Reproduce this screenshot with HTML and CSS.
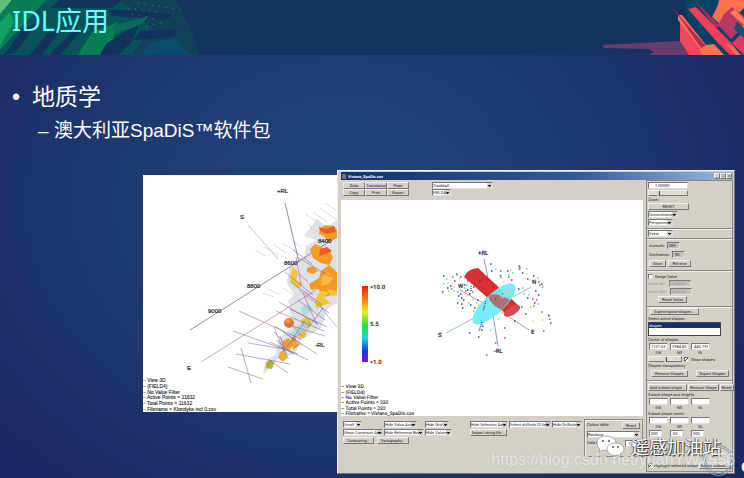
FILE: index.html
```html
<!DOCTYPE html>
<html lang="zh-CN">
<head>
<meta charset="utf-8">
<title>IDL应用</title>
<link rel="stylesheet" href="styles.css">
</head>
<body>
<main class="slide">
  <header class="banner">
    <svg class="art" viewBox="0 0 210 55" aria-hidden="true">
      <path fill="#07535a" d="M0 0H160L176 16 168 35 145 55H0Z"/>
      <path fill="#114058" d="M120 0H176L190 28 200 55H132L150 28Z"/>
      <path fill="#14305c" d="M108 9L172 14 168 19 112 16ZM140 31L178 29 174 37 134 40ZM60 0H122L112 8H50Z"/>
      <path fill="#087d56" d="M0 10L14 0H46L20 28 0 50ZM78 55L92 32 118 22 112 44 102 55Z"/>
      <path fill="#13a064" d="M0 22L10 12 14 22 0 46Z"/>
      <path fill="#5cc07c" d="M0 0H12L0 14Z"/>
      <path fill="#123258" d="M22 30L38 22 16 52 4 55ZM48 33L60 31 42 55H30ZM70 34L82 30 60 55H50ZM106 44L140 22 132 42 118 55H100Z"/>
      <path fill="#0b6a5c" d="M112 26L148 16 142 24 116 34Z"/>
      <path fill="#0a4c6c" d="M150 42L176 38 190 55H142Z"/>
      <path stroke="#4b8b90" stroke-width="1" stroke-dasharray="1 6" fill="none" d="M128 8L160 12M132 14L158 20M138 3L182 10M146 26L166 22"/>
    </svg>
    <svg class="art art-right" viewBox="0 0 150 55" aria-hidden="true">
      <path fill="#084266" d="M90 0H150V55H112L94 20Z"/>
      <path fill="#663e6d" d="M9 45L86 41 96 55H54L60 52 55 49 9 48Z"/>
      <path fill="#f0455b" d="M86 22L111 51 109 55H95L86 41Z"/>
      <path fill="#ff7150" d="M84 15H88L112 45 120 44 130 55H108L104 46 84 20Z"/>
      <path fill="#b52d5b" d="M79 8L112 46 107 48ZM100 0L126 26 122 28Z"/>
      <path fill="#f23f5c" d="M94 9L102 7 140 46 146 55H136L124 43Z"/>
      <path fill="#ff704f" d="M125 0H150V8L130 28 118 17 124 5Z"/>
      <path fill="#b73767" d="M130 14L138 7 150 16V26L137 39 124 25Z"/>
      <path fill="#ff7c50" d="M136 13L141 9 150 19V25ZM143 32L150 25V34Z"/>
      <path fill="#e1365f" d="M138 43L150 31V55Z"/>
      <path fill="#f5714e" d="M132 44L138 46 147 55H142Z"/>
      <path fill="#15506f" d="M143 22L150 28V38L140 29Z"/>
    </svg>
    <h1>IDL应用</h1>
  </header>

  <ul class="outline">
    <li>地质学
      <ul><li>澳大利亚SpaDiS™软件包</li></ul>
    </li>
  </ul>

  <section class="stage">
    <svg class="figure" viewBox="143 175 194 237" role="img" aria-label="Klondyke 3D">
      <path fill="none" stroke="#d9c8e3" d="M255 250l10 6M264 247l14 8M273 244l13 9M282 243l14 8M291 240l10 7M305 214l14 9M313 212l14 10M320 208l17 12M325 203l12 8M308 225l12 8M262 293l12 4M268 289l11 5M325 260l12 7M322 286l15 9M300 258l20 14M286 280l18 12M283 288l18 12" stroke-width=".7"/>
      <g fill="#d6d6df" opacity=".75">
        <path d="M304 236l13-17 10 8 10-7v83l-20 12-18-12-12-20 3-19 14-6 2-12 10-6Z"/>
        <path d="M288 300l13-10 20 1 8 13-8 24-20 12-6 14-16 4-16 17 2-13 11-8 3-15 14-13Z"/>
      </g>
      <path fill="none" stroke="#6b587d" stroke-width=".7" d="M190 330L337 237M285 203L299 262"/>
      <path fill="none" stroke="#bf7891" stroke-width=".7" d="M201 362L316 290"/>
      <path fill="none" stroke="#82bda4" stroke-width=".7" d="M248 225L278 259M313 298l24 29"/>
      <g fill="#f29a22">
        <path d="M320 229l5-4 9 1 3 4v7l-9 5-4-6-5-2Z"/><path d="M310 249l5-5 7 3 1 8 6-6 4 9-4 7-8-2-8-5Z"/>
        <path d="M309 284l10-6 2-7 8-6 8 7v21l-12 4-7-8-7 1Z"/><path d="M307 268l6-2 5 5-5 3-6-2Z"/>
      </g>
      <path fill="#ef5c2a" d="M319 227l7 2 8-3 2 6-9 2-7-3ZM320 249l7-2 5 4-6 3-7 2Z"/>
      <path fill="#ffb648" d="M322 276l6-4 5 6-4 6-8 2Z"/>
      <path fill="#efc53b" d="M293 267l5 5-2 8 7 4-4 5-9-8 1-8ZM315 300l5-9 9 1-5 6 7 5-7 2-8 4ZM327 289l10 2v4l-6 1Z"/>
      <circle cx="289" cy="323" r="5" fill="#e47d27"/><circle cx="288" cy="321" r="2" fill="#ff9b42"/>
      <circle cx="306" cy="323" r="5" fill="#e7bd35"/><circle cx="302" cy="334" r="4" fill="#e2bc47"/>
      <path fill="#eda126" d="M282 342l6-4 7 5-5 6-7-1ZM291 338l4-3 1 7 4 3-7 5Z"/>
      <path fill="#e9b236" d="M280 352l5-3 2 9-4 4-5-4Z"/><path fill="#abb52b" d="M266 363l4-3 4 3-2 6-6-1Z"/>
      <path fill="#9ad7d5" opacity=".7" d="M296 327l10-6 3 4-12 12-8-2ZM300 308l8-4 6 5-10 7Z"/>
      <path fill="none" stroke="#75568d" stroke-width=".5" d="M239 311l62 28M233 331l65 23M248 343l42 7M236 354l54 10M228 367l35 12M241 348l10 35M276 311l48 20M279 302l39 22M290 309l37 18M285 324l40 12M283 332l34 22M275 326l27 19M276 340l17 14M268 359l20 14M270 342l38 18M274 327l10 25M280 336l8 23M293 250l19 14M297 257l34 20M285 272l28 23M291 282l31 23M299 290l30 23M298 300l27 20M303 293l14 32M323 308l-18 24M287 347l18-26"/>
      <path fill="none" stroke="#c46ac0" stroke-width=".7" d="M299 274l9 8M305 291l8 8M290 323l12 13M274 332l14 14M286 348l13-14M296 257l5 27"/>
      <g class="axis-text"><text x="277" y="193">+RL</text><text x="240" y="219">S</text><text x="318" y="243">8400</text><text x="284" y="265">8600</text><text x="247" y="288">8800</text><text x="208" y="313">9000</text><text x="187" y="370">E</text><text x="315" y="347">-RL</text></g>
      <g class="info-text"><text x="143" y="382">– View 3D</text><text x="143" y="388">–  (FIELD4)</text><text x="143" y="394">– No Value Filter</text><text x="143" y="399">– Active Points = 11632</text><text x="143" y="405">– Total Points = 11632</text><text x="143" y="411">– Filename = Klondyke incl 0.csv</text></g>
    </svg>

    <article class="window">
      <div class="titlebar"><span class="appicon"></span><span class="caption">Viviane_SpaDis.csv</span>
        <button aria-label="Minimize">_</button><button aria-label="Maximize">□</button><button aria-label="Close">×</button></div>
      <div class="content">
        <div class="workspace">
          <div class="toolbar">
            <div class="actions"><button>Data</button><button>Translation</button><button>Pose</button><button>Copy</button><button>Print</button><button>Export</button></div>
            <div class="modes"><select aria-label="Mode"><option>Trackball</option></select><select class="fit" aria-label="Field"><option>FIELD4</option></select></div>
          </div>
          <svg class="plot" viewBox="341 200 302 216" role="img" aria-label="Viviane 3D">
            <defs>
              <linearGradient id="spectrum" x1="0" y1="0" x2="0" y2="1"><stop offset="0" stop-color="#f21b08"/><stop offset=".2" stop-color="#ff8b00"/><stop offset=".34" stop-color="#eeee10"/><stop offset=".52" stop-color="#20e62c"/><stop offset=".68" stop-color="#10dfe2"/><stop offset=".86" stop-color="#1638ef"/><stop offset="1" stop-color="#7d13e8"/></linearGradient>
              <linearGradient id="tube" x1="0" y1="1" x2="1" y2="0"><stop offset="0" stop-color="#b61d23"/><stop offset=".5" stop-color="#dc3035"/><stop offset="1" stop-color="#b31d24"/></linearGradient>
            </defs>
            <rect x="362" y="286" width="6" height="76" fill="url(#spectrum)"/>
            <path fill="none" stroke="#6d6599" stroke-width=".7" d="M484 259l4 19M493 315l5 31"/>
            <path fill="none" stroke="#6fac75" stroke-width=".7" d="M446 333l28-15M513 297l18-10"/>
            <path fill="none" stroke="#b4626f" stroke-width=".7" d="M460 290l23 13M500 311l29 19"/>
            <g fill="none" stroke-width="1.6">
            <path stroke="#3636d8" d="M442 292h1.500M443 276h1.500M447 288h1.500M450 286h1.500M454 281h1.500M458 296h1.500M457 303h1.500M460 294h1.500M461 298h1.500M461 304h1.500M463 300h1.500M462 308h1.500M467 290h1.500M469 294h1.500M470 305h1.500M474 308h1.500M477 300h1.500M480 320h1.500M482 326h1.500M481 330h1.500M469 333h1.500M478 337h1.500M490 264h1.500M491 271h1.500M500 276h1.500M507 271h1.500M511 280h1.500M519 267h1.500M522 273h1.500M527 279h1.500M533 276h1.500M535 291h1.500M538 295h1.500M534 303h1.500M521 307h1.500M525 314h1.500M548 316h1.500M550 323h1.500M456 274h1.500M464 285h1.500M473 287h1.500M518 289h1.500M527 298h1.500M541 284h1.500M514 321h1.500"/>
            <path stroke="#de4058" d="M452 277h1.500M460 277h1.500M465 291h1.500M472 292h1.500M479 309h1.500M500 271h1.500M508 277h1.500M518 266h1.500M519 269h1.500M538 282h1.500M539 285h1.500M532 299h1.500M536 300h1.500M533 306h1.500M541 312h1.500M548 315h1.500M549 319h1.500M543 331h1.500M504 328h1.500M504 338h1.500M486 355h1.500M495 343h1.500M451 289h1.500M467 281h1.500"/>
            <path stroke="#68d968" d="M443 284h1.500M448 291h1.500M456 275h1.500M457 292h1.500M466 285h1.500M468 303h1.500M472 299h1.500M473 311h1.500M500 278h1.500M508 288h1.500M518 269h1.500M526 269h1.500M537 278h1.500M542 287h1.500M530 307h1.500M523 294h1.500M498 319h1.500M512 273h1.500M479 272h1.500"/>
            <path stroke="#dfd867" d="M447 283h1.500M453 287h1.500M459 279h1.500M499 275h1.500M510 270h1.500M526 274h1.500M529 280h1.500M542 286h1.500M533 305h1.500M542 320h1.500M532 321h1.500M478 305h1.500M503 282h1.500M466 296h1.500"/>
            <path stroke="#5bd7e5" d="M446 279h1.500M453 291h1.500M464 288h1.500M476 303h1.500M495 269h1.500M508 275h1.500M522 288h1.500M528 295h1.500M538 304h1.500M490 330h1.500M500 292h1.500M474 316h1.500"/>
            </g>
            <path fill="url(#tube)" d="M464 277Q467 269 478 268L520 307Q518 314 506 314Z"/>
            <ellipse cx="512" cy="311" rx="9" ry="4" transform="rotate(-30 512 311)" fill="#d34b4e"/>
            <ellipse cx="494" cy="304" rx="28" ry="10" transform="rotate(-43 494 304)" fill="#70edf3" opacity=".94"/>
            <path fill="#aa7378" d="M488 295Q497 292 510 300L502 310Q490 305 488 295Z"/>
            <ellipse cx="507" cy="292" rx="8" ry="3" transform="rotate(-43 507 292)" fill="#a8d8dd" opacity=".75"/>
            <path stroke="#3446b9" stroke-width="1.4" stroke-dasharray="1 1" d="M486 301l-3 10M482 322l-3 9M471 286v6" fill="none"/>
            <path stroke="#531f35" stroke-width="1.2" fill="none" d="M479 281h2M493 287h1M502 294h1M495 299h1"/>
            <g class="axis-text"><text x="478" y="255">+RL</text><text x="438" y="337">S</text><text x="531" y="334">E</text><text x="532" y="284">N</text><text x="458" y="288">W</text><text x="494" y="353">-RL</text></g>
            <g class="scale-text"><text x="370" y="289">&gt;10.0</text><text x="370" y="326">5.5</text><text x="370" y="364">&lt;1.0</text></g>
            <g class="info-text"><text x="341" y="388">– View 3D</text><text x="341" y="394">–  (FIELD4)</text><text x="341" y="399">– No Value Filter</text><text x="341" y="404">– Active Points = 232</text><text x="341" y="410">– Total Points = 232</text><text x="341" y="415">– Filename = Viviane_SpaDis.csv</text></g>
          </svg>
          <div class="options">
            <div class="option-grid">
              <select class="fit" aria-label="Size"><option>Small</option></select>
              <select class="mid" aria-label="Value axis"><option>Hide Value Axis</option></select>
              <select class="mini" aria-label="Grid"><option>Hide Grid</option></select>
              <select aria-label="Selection axis"><option>Hide Selection Axis</option></select>
              <select aria-label="Drillhole field"><option>Select drillhole ID field</option></select>
              <select aria-label="Drillholes"><option>Hide Drillholes</option></select>
              <select aria-label="Constraint axis"><option>Show Constraint Axis</option></select>
              <select aria-label="Reference box"><option>Hide Reference Box</option></select>
              <select class="small" aria-label="Values"><option>Hide Values</option></select>
              <button class="import">Import string file...</button>
              <div class="pair"><button>Contouring...</button><button>Variography...</button></div>
            </div>
            <div class="colours">
              <div class="spread"><label for="palette">Colour table:</label><button>Reset</button></div>
              <select id="palette"><option>Rainbow</option></select>
              <div class="spread"><label for="range">Data Range</label><input id="range" value="10"></div>
            </div>
          </div>
        </div>

        <aside class="side">
          <section>
            <input class="zoom" aria-label="Zoom factor" value="1.00000">
            <input class="slider" id="zoom" type="range" value="10"><label for="zoom">Zoom</label>
            <button class="reset">RESET</button>
            <select class="w30" aria-label="Constraint"><option>Unconstrained</option></select>
            <select class="w24" aria-label="Projection"><option>Perspective</option></select>
          </section>
          <section class="tight"><select class="w24" aria-label="Value"><option>Value</option></select></section>
          <section class="roomy">
            <div class="row"><label for="az">Azimuth:</label><input class="grey w12" id="az" value="000"></div>
            <div class="row"><label for="de">Declination:</label><input class="grey w12" id="de" value="-90"></div>
            <div class="row"><button>Store</button><button>Retrieve</button></div>
          </section>
          <section class="loose">
            <label class="row"><input type="checkbox">Range Value</label>
            <div class="row dim"><label for="mn">Value Min:</label><input class="grey w21" id="mn" value="0.00000" disabled></div>
            <div class="row dim"><label for="mx">Value Max:</label><input class="grey w21" id="mx" value="0.00000" disabled></div>
            <button class="indent">Reset Value</button>
          </section>
          <section>
            <button class="super">Superimpose shapes...</button>
            <label for="shapes">Select active shapes:</label>
            <select class="list" id="shapes" size="2"><option selected>shapes</option></select>
            <span>Centre of shapes:</span>
            <div class="triple"><label><input value="1101.63">EW</label><label><input value="2984.85">NS</label><label><input value="-440.739">RL</label></div>
            <div class="row top"><input class="slider short" id="tr" type="range" value="50"><label class="row"><input type="checkbox" checked>Show shapes</label></div>
            <label for="tr">Shapes transparency</label>
            <div class="row around"><button>Remove Shapes</button><button>Export Shapes</button></div>
          </section>
          <section class="last">
            <div class="row"><button>Add subset shape...</button><button>Remove Shape</button><button>Reset</button></div>
            <span>Subset shape axis lengths</span>
            <div class="triple"><label><input>EW</label><label><input>NS</label><label><input>RL</label></div>
            <span>Subset shape center</span>
            <div class="triple"><label><input>EW</label><label><input>NS</label><label><input>RL</label></div>
            <div class="triple narrow"><input aria-label="Rotation" value="000"><input aria-label="Tilt" value="-00"><input aria-label="Roll" value="000"></div>
            <div class="row end"><label class="row"><input type="checkbox" checked>Highlight selected shape</label><button>Export subset...</button></div>
          </section>
        </aside>
      </div>
    </article>
  </section>

  <div class="badge">e</div>
  <div class="brand">
    <svg viewBox="0 0 29 23" aria-hidden="true"><g fill="#fff" stroke="#777" stroke-width=".6"><path d="M10 1C4 1 1 4 1 8c0 3 1 4 3 6l-1 3 4-2c8 2 13-2 13-7 0-4-4-7-10-7Z"/><path d="M20 8c-6 0-9 3-9 6 0 4 5 8 11 6l3 2-1-3c2-1 4-3 4-5 0-3-4-6-8-6Z"/></g><g fill="#555"><circle cx="7" cy="6" r="1"/><circle cx="13" cy="6" r="1"/><circle cx="17" cy="12" r="1"/><circle cx="22" cy="12" r="1"/></g></svg>
    <span>遥感加油站</span>
  </div>
  <div class="url">https://blog.csdn.net/yuanYW7556</div>
</main>
</body>
</html>
```
FILE: styles.css
```css
* { box-sizing: border-box; }
body { margin: 0; background: #182862; font-family: "Liberation Sans", "Noto Sans CJK SC", sans-serif; }
.slide {
  position: relative;
  min-height: 100vh;
  overflow: hidden;
  color: #fff;
  background: radial-gradient(ellipse 60% 75% at 46% 42%, #20457b 0%, #1e3b72 45%, #1a2963 100%);
}
.banner { position: relative; height: 55px; padding-left: 12px; background: #16335f; overflow: hidden; }
.art { position: absolute; left: 0; top: 0; height: 55px; }
.art-right { left: auto; right: 0; }
h1 { position: relative; margin: 0; font: 400 27px/42px "Noto Sans", "Noto Sans CJK SC", sans-serif; color: #70faff; }
.outline, .outline ul { margin: 0; padding: 0; list-style: none; }
.outline { padding: 24px 0 0 12px; font-size: 23px; line-height: 36px; }
.outline > li::before { content: "•"; display: inline-block; width: 20px; }
.outline ul { padding-left: 26px; font-size: 19px; line-height: 32px; }
.outline ul li::before { content: "–"; display: inline-block; width: 16px; }

.stage { display: grid; grid-template-columns: 194fr 398fr; align-items: start; margin: 23px 9px 0 143px; }
.figure { display: block; width: 100%; margin-top: 5px; background: #fff; }
.axis-text { font-size: 6px; fill: #222; stroke: #222; stroke-width: .2px; }
.scale-text { font-size: 6px; font-weight: 700; fill: #333; }
.info-text { font-size: 5px; fill: #222; stroke: #222; stroke-width: .1px; white-space: pre; }

.window { min-width: 0; padding: 1px 1px 1px 3px; background: #d4d0c8; border: 1px solid; border-color: #eee #777 #777 #eee; color: #222; font-family: Roboto, sans-serif; font-size: 4px; line-height: 5px; text-rendering: geometricPrecision; }
.titlebar { display: flex; align-items: center; height: 8px; padding: 0 1px; background: linear-gradient(90deg, #12306f, #32599c 60%, #9bb9df); color: #fff; }
.appicon { width: 4px; height: 5px; margin-right: 2px; background: #826a76; }
.caption { flex: 1; font-weight: 700; }
.titlebar button { width: 6px; height: 6px; padding: 0; line-height: 4px; }
.content { display: grid; grid-template-columns: minmax(0, 302fr) minmax(0, 87fr); gap: 3px; }
.workspace { display: flex; flex-direction: column; min-width: 0; }
button, input, select { margin: 0; font: inherit; color: #222; border-radius: 0; }
button { height: 7px; padding: 0 3px; line-height: 5px; white-space: nowrap; background: #d4d0c8; border: 1px solid; border-color: #eee #777 #777 #eee; }
input, select { width: 100%; height: 7px; padding: 0 2px; line-height: 5px; background: #fff; border: 1px solid; border-color: #777 #ddd #ddd #777; }
select {
  appearance: none;
  padding: 0;
  background:
    linear-gradient(#222, #222) right 1px top 2px / 3px 1px no-repeat,
    linear-gradient(#222, #222) right 2px top 3px / 1px 1px no-repeat,
    linear-gradient(#d4d0c8, #d4d0c8) right / 5px 100% no-repeat, #fff;
}
.toolbar { display: flex; gap: 23px; padding: 2px 2px 4px; }
.actions { display: grid; grid-template-columns: repeat(3, 22px); }
.actions button { padding: 0; }
.modes { display: grid; width: 61px; }
.fit { width: 19px; }
.mid { width: 33px; }
.mini { width: 24px; }
.small { width: 27px; }
.plot { display: block; width: 100%; background: #fff; }
.options { display: flex; justify-content: space-between; gap: 2px; padding: 3px 0 15px 2px; }
.option-grid { display: grid; grid-template-columns: 40px 40px 44px 38px 42px 30px; gap: 1px; align-content: start; padding-top: 2px; }
.option-grid .import { grid-column: 4; justify-self: start; padding: 0 1px; }
.pair { grid-column: 1 / 4; display: flex; gap: 3px; }
.colours { flex: 0 0 59px; display: grid; align-content: start; gap: 2px; height: 38px; padding: 2px; border: 1px solid #888; box-shadow: inset 1px 1px #eee; }
.spread { display: flex; justify-content: space-between; }
.spread input { width: 15px; }

.side { display: flex; flex-direction: column; border: 1px solid #888; }
.side section { display: flex; flex-direction: column; align-items: flex-start; gap: 1px; padding: 1px 1px 2px; border-bottom: 1px solid #888; box-shadow: 0 1px #eee; }
.side .tight { padding: 1px; }
.side .roomy { gap: 2px; padding: 3px 2px; }
.side .loose { gap: 1px; padding: 3px 1px; }
.side .last { border: 0; box-shadow: none; flex: 1; padding-top: 3px; }
.side .zoom { width: 40px; padding-left: 6px; }
.side .reset { width: 41px; }
.side .w30 { width: 30px; }
.side .w24 { width: 25px; }
.side .w12 { width: 13px; }
.side .w21 { width: 22px; }
.side .grey { padding: 0 1px; background: #c4c0ba; }
.side .indent { margin-left: 10px; }
.side .super { margin-left: 2px; }
.row { display: flex; align-items: center; gap: 2px; white-space: nowrap; }
.dim { color: #999; }
.dim input { color: #999; }
.row.around { gap: 8px; padding: 1px 3px; }
.last .row { gap: 1px; }
.last .row button { padding: 0 1px; }
.row.end { justify-content: space-between; width: 76px; margin-top: auto; }
input[type="checkbox"] { appearance: none; width: 5px; height: 5px; padding: 0; }
input[type="checkbox"]:checked { background: linear-gradient(135deg, #fff 35%, #333 35% 65%, #fff 65%); }
.slider { appearance: none; width: 40px; height: 6px; padding: 0 5px; background: #dedbd5; border-color: #eee #777 #777 #eee; }
.slider.short { width: 34px; }
.slider::-webkit-slider-thumb { appearance: none; width: 3px; height: 5px; background: #d4d0c8; border-right: 1px solid #444; }
.side .list { width: 73px; height: 14px; background: #fff; border-color: #444; overflow: hidden; }
.list option { min-height: 5px; padding: 0; }
.list option:checked { background: #172c72; color: #fff; }
.triple { display: grid; grid-template-columns: repeat(3, 19px); gap: 2px; padding: 0 1px; text-align: center; }
.triple label { display: grid; }
.triple input { padding: 0 1px; }
.triple.narrow input { width: 13px; }

.brand { position: absolute; right: 23px; bottom: 19px; display: flex; align-items: center; gap: 6px; font: 18px/26px "Noto Sans CJK SC", sans-serif; text-shadow: 1px 1px 1px #222, -1px 0 1px #555; }
.brand svg { width: 29px; height: 23px; }
.url { position: absolute; right: 9px; bottom: 6px; font: 16px/24px "Liberation Sans", sans-serif; color: #ffffffb3; text-shadow: 0 0 1px #8888; }
.badge { position: absolute; right: -7px; bottom: 2px; font: 700 18px/20px "Liberation Sans", sans-serif; }
.badge::before { content: ""; position: absolute; right: 17px; bottom: 0; width: 25px; height: 25px; border: 3px double #7895ad; border-radius: 50%; }
```
